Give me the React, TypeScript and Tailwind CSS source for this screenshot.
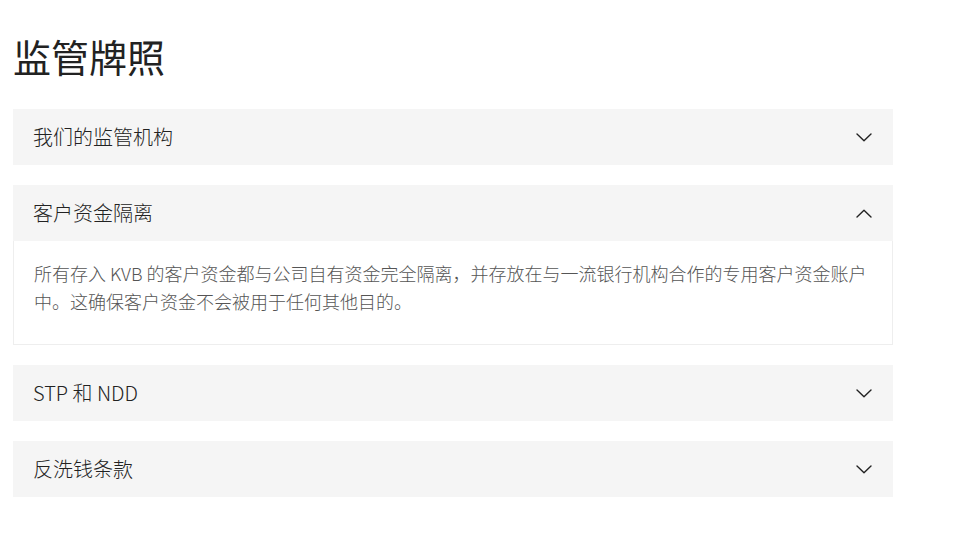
import { useState } from "react";

const FONT = { fontFamily: '"Noto Sans CJK SC", "Noto Sans", sans-serif' };

const ITEMS = [
  { title: "我们的监管机构", body: "" },
  {
    title: "客户资金隔离",
    body: "所有存入 KVB 的客户资金都与公司自有资金完全隔离，并存放在与一流银行机构合作的专用客户资金账户中。这确保客户资金不会被用于任何其他目的。",
  },
  { title: "STP 和 NDD", body: "" },
  { title: "反洗钱条款", body: "" },
];

function Chevron({ up }: { up?: boolean }) {
  return (
    <svg width="16" height="9" viewBox="0 0 16 9" fill="none" className="shrink-0">
      <polyline
        points={up ? "1,8 8,1.3 15,8" : "1,1 8,7.7 15,1"}
        stroke="#222"
        strokeWidth="1.4"
        strokeLinecap="round"
        strokeLinejoin="round"
      />
    </svg>
  );
}

export default function App() {
  const [open, setOpen] = useState<number | null>(1);

  return (
    <div className="min-h-screen bg-white px-[13px] pt-[32px] font-light" style={FONT}>
      <h1 className="text-[38px] leading-[48px] font-normal text-[#222] mb-[29px]">监管牌照</h1>

      <div className="flex w-[880px] flex-col gap-5">
        {ITEMS.map((item, i) => {
          const isOpen = open === i;
          return (
            <div key={item.title}>
              <button
                onClick={() => setOpen(isOpen ? null : i)}
                className="flex h-14 w-full items-center justify-between bg-[#f5f5f5] pl-[20px] pr-[21px] text-left"
              >
                <span className="text-[20px] font-light text-[#222]">{item.title}</span>
                <Chevron up={isOpen} />
              </button>
              {isOpen && item.body && (
                <div className="border-x border-b border-[#eeeeee] px-[20px] pt-[18px] pb-[29px]">
                  <p className="text-[18px] leading-[28px] font-light text-[#555]">{item.body}</p>
                </div>
              )}
            </div>
          );
        })}
      </div>
    </div>
  );
}
